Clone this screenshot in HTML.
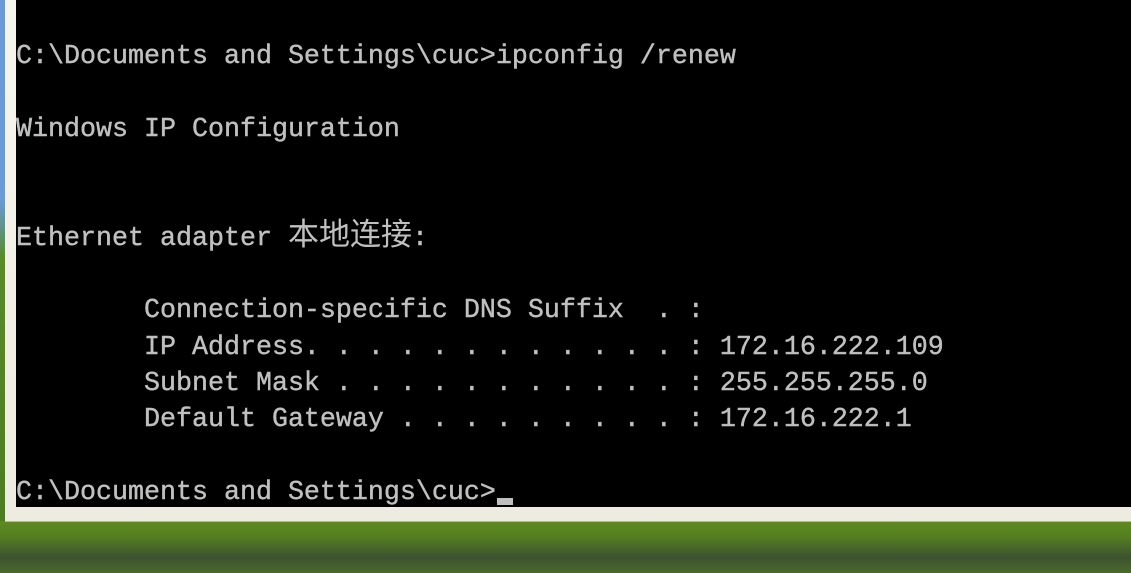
<!DOCTYPE html>
<html><head><meta charset="utf-8"><style>
html,body{margin:0;padding:0;width:1131px;height:573px;overflow:hidden;position:relative;
background:linear-gradient(180deg,#4f7a1c 0%,#5a8a24 40%,#3f5a2a 75%,#4a6b2a 100%);}
#left{position:absolute;left:0;top:0;width:6px;height:573px;background:linear-gradient(180deg,#6a9ad8 0%,#6a9ad8 35%,#5a8a2a 45%,#4a7a20 100%);}
#frame{position:absolute;left:5px;top:-10px;width:1140px;height:531px;background:linear-gradient(180deg,#f7f6ee,#eeebe0);border-bottom:1px solid #b8b4a4;}
#con{position:absolute;left:16px;top:0;width:1120px;height:507px;background:#000;}
.l{position:absolute;left:16px;color:#c0c0c0;font-family:"Liberation Mono","Noto Sans CJK SC",monospace;font-size:26.67px;font-weight:normal;white-space:pre;line-height:36px;-webkit-text-stroke:0.4px #c0c0c0;}
.cjk{font-family:"Noto Sans CJK SC",sans-serif;font-weight:normal;font-size:31px;line-height:0;-webkit-text-stroke:0;}
#cur{position:absolute;left:497px;top:498px;width:16px;height:7px;background:#c0c0c0;}
#grass{position:absolute;left:0;top:521px;width:1131px;height:52px;background:linear-gradient(180deg,#5e8a22 0%,#557f20 30%,#3d5230 70%,#4a6a2a 100%);}
</style></head><body>
<div id="left"></div>
<div id="grass"></div>
<div id="frame"></div>
<div id="con"></div>
<div class="l" style="top:39px">C:\Documents and Settings\cuc&gt;ipconfig /renew</div>
<div class="l" style="top:112px">Windows IP Configuration</div>
<div class="l" style="top:221px">Ethernet adapter <span class="cjk">本地连接</span>:</div>
<div class="l" style="top:293px">        Connection-specific DNS Suffix  . :</div>
<div class="l" style="top:330px">        IP Address. . . . . . . . . . . . : 172.16.222.109</div>
<div class="l" style="top:366px">        Subnet Mask . . . . . . . . . . . : 255.255.255.0</div>
<div class="l" style="top:402px">        Default Gateway . . . . . . . . . : 172.16.222.1</div>
<div class="l" style="top:475px">C:\Documents and Settings\cuc&gt;</div>
<div id="cur"></div>
</body></html>
